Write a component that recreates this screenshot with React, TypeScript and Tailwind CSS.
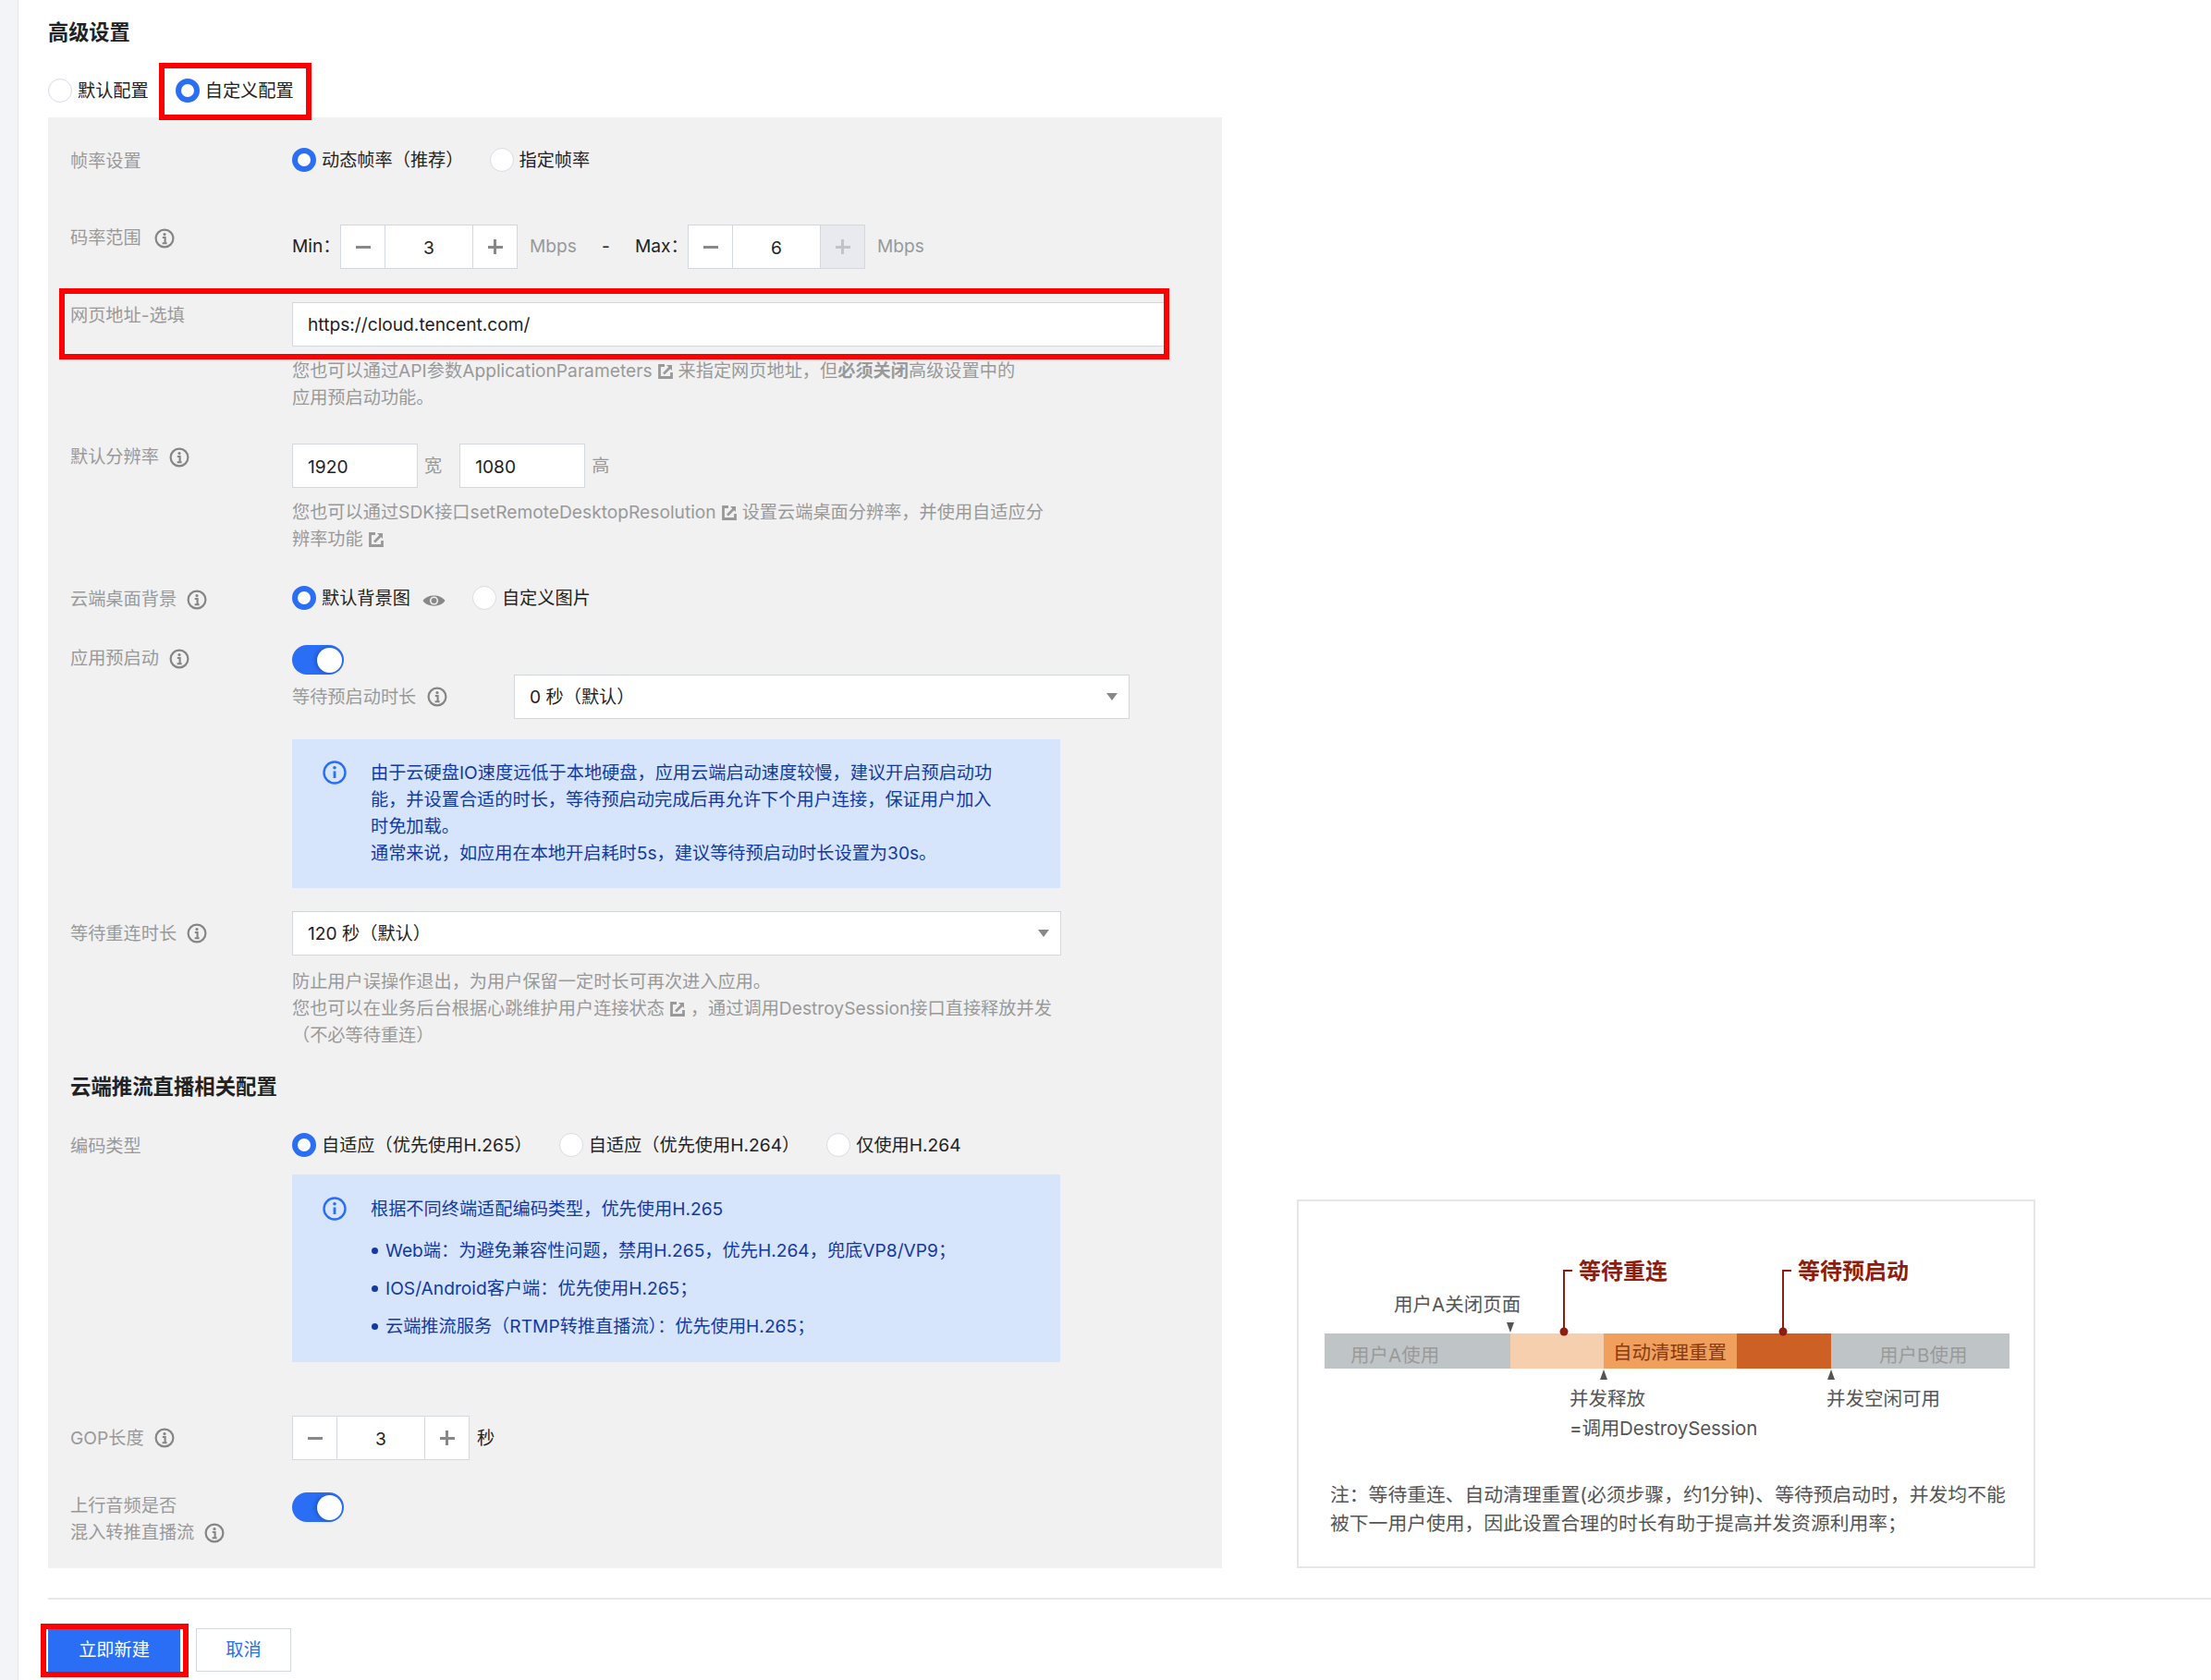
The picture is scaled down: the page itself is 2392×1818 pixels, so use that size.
import React from "react";

function Info({ className = "text-[#858585]" }: { className?: string }) {
  return (
    <svg viewBox="0 0 22 22" className={`w-[22px] h-[22px] shrink-0 ${className}`} fill="none" stroke="currentColor">
      <circle cx="11" cy="11" r="9.4" strokeWidth="2.2" />
      <circle cx="11" cy="6.6" r="1.6" fill="currentColor" stroke="none" />
      <path d="M8.8 10h2.8v6 M8.6 16.2h5" strokeWidth="2.1" />
    </svg>
  );
}

function ExtLink() {
  return (
    <svg viewBox="0 0 16 16" className="inline-block w-4 h-4 mx-[6px] align-[-2px] text-[#999999]" fill="none" stroke="currentColor">
      <path d="M7 1.5H1.5v13h13V9" strokeWidth="2.8" />
      <path d="M6 10.5L13 3.5" strokeWidth="2.6" />
      <path d="M9 1h6v6z" fill="currentColor" stroke="none" />
    </svg>
  );
}

function Eye() {
  return (
    <svg viewBox="0 0 25 16" className="w-[25px] h-4 ml-[13px] mt-2">
      <path d="M0.5 8C5 0.5 20 0.5 24.5 8C20 15.5 5 15.5 0.5 8Z" fill="#888888" />
      <circle cx="12.5" cy="8" r="4.6" fill="#f1f1f2" />
      <circle cx="12.5" cy="8" r="3" fill="#888888" />
    </svg>
  );
}

function Radio({ label, on, className = "" }: { label: React.ReactNode; on?: boolean; className?: string }) {
  return (
    <div className={`flex items-center h-[26px] text-[#222222] ${className}`}>
      <span
        className={
          on
            ? "w-[26px] h-[26px] rounded-full bg-white border-[6px] border-[#2a6ef5] mr-[6px] shrink-0"
            : "w-[26px] h-[26px] rounded-full bg-white border border-[#d8dce4] mr-[6px] shrink-0"
        }
      />
      <span className="whitespace-nowrap">{label}</span>
    </div>
  );
}

function Label({ text, info, className = "" }: { text: React.ReactNode; info?: boolean; className?: string }) {
  return (
    <div className={`w-[240px] shrink-0 flex items-center text-[#999999] whitespace-nowrap ${className}`}>
      {text}
      {info && <span className="ml-[11px]"><Info /></span>}
    </div>
  );
}

function Stepper({ value, plusDisabled }: { value: string; plusDisabled?: boolean }) {
  return (
    <div className="flex h-12 w-[192px] bg-white border-[1.5px] border-[#d3d7de] text-[#222222]">
      <div className="w-[48px] flex items-center justify-center border-r border-[#d3d7de] text-[#888888]">
        <span className="w-4 h-[3px] bg-current" />
      </div>
      <div className="flex-1 flex items-center justify-center pt-[2px]">{value}</div>
      <div
        className={`relative w-[48px] flex items-center justify-center border-l border-[#d3d7de] ${
          plusDisabled ? "bg-[#e8eaef] text-[#c0c3c9]" : "text-[#888888]"
        }`}
      >
        <span className="w-4 h-[3px] bg-current" />
        <span className="absolute w-[3px] h-4 bg-current" />
      </div>
    </div>
  );
}

function Select({ value, className = "" }: { value: string; className?: string }) {
  return (
    <div className={`flex items-center justify-between h-12 bg-white border-[1.5px] border-[#d3d7de] pl-4 pr-3 text-[#222222] ${className}`}>
      <span>{value}</span>
      <span className="w-0 h-0 border-x-[6.5px] border-x-transparent border-t-[8px] border-t-[#888888]" />
    </div>
  );
}

function Toggle() {
  return (
    <div className="flex items-center justify-end w-14 h-8 pr-[2px] rounded-full bg-[#2a6ef5]">
      <span className="w-[27px] h-[27px] rounded-full bg-white shadow-[-2px_0_4px_rgba(0,0,60,0.25)]" />
    </div>
  );
}

function Hint({ lines, className = "" }: { lines: React.ReactNode[]; className?: string }) {
  return (
    <div className={`text-[#999999] ${className}`}>
      {lines.map((l, i) => (
        <div key={i} className="whitespace-nowrap">{l}</div>
      ))}
    </div>
  );
}

function Notice({ children, className = "" }: { children: React.ReactNode; className?: string }) {
  return (
    <div className={`flex w-[831px] bg-[#d6e5fc] pl-[33px] text-[#14399f] ${className}`}>
      <svg viewBox="0 0 26 26" className="w-[26px] h-[26px] shrink-0 mt-[1px] mr-[26px] text-[#2a6ef5]" fill="none" stroke="currentColor">
        <circle cx="13" cy="13" r="11.5" strokeWidth="2.4" />
        <circle cx="13" cy="7.8" r="1.8" fill="currentColor" stroke="none" />
        <path d="M13 11.5v7.5" strokeWidth="2.8" />
      </svg>
      <div className="whitespace-nowrap">{children}</div>
    </div>
  );
}

function Bullet({ children }: { children: React.ReactNode }) {
  return (
    <div className="flex items-center mt-3">
      <span className="w-[7px] h-[7px] rounded-full bg-[#14399f] ml-[1px] mr-2" />
      {children}
    </div>
  );
}

function Diagram() {
  return (
    <div className="relative w-[799px] h-[399px] bg-white border-2 border-[#e6e6e6] text-[20.5px] leading-[30px] text-[#555555]">
      <div className="absolute left-[28px] top-[143px] flex h-[38px] w-[741px] text-[#9a9a9a]">
        <div className="w-[201px] bg-[#bfc5c7] pl-[28px] pt-[9px]">用户A使用</div>
        <div className="w-[101px] bg-[#f5cfae]" />
        <div className="w-[144px] bg-[#f0a05c] pl-[10px] pt-[6px] text-[#8a3a10]">自动清理重置</div>
        <div className="w-[102px] bg-[#cd6024]" />
        <div className="w-[193px] bg-[#bfc5c7] pl-[52px] pt-[9px]">用户B使用</div>
      </div>
      <svg className="absolute inset-0 w-full h-full" fill="none">
        <path d="M296 75H287V140 M533 75H524V140" stroke="#8c1d0f" strokeWidth="2" />
        <circle cx="287" cy="141" r="4.5" fill="#8c1d0f" />
        <circle cx="524" cy="141" r="4.5" fill="#8c1d0f" />
        <path d="M225 131h8l-4 11z M326 193h8l-4-11z M572 193h8l-4-11z" fill="#555555" />
      </svg>
      <div className="absolute left-[303px] top-[61px] text-[24px] font-semibold text-[#8c1d0f]">等待重连</div>
      <div className="absolute left-[540px] top-[61px] text-[24px] font-semibold text-[#8c1d0f]">等待预启动</div>
      <div className="absolute left-[103px] top-[97px]">用户A关闭页面</div>
      <div className="absolute left-[293px] top-[199px] whitespace-nowrap">并发释放</div>
      <div className="absolute left-[293px] top-[231px] whitespace-nowrap tracking-[-0.15px]">=调用DestroySession</div>
      <div className="absolute left-[571px] top-[199px] whitespace-nowrap">并发空闲可用</div>
      <div className="absolute left-[34px] top-[303px] whitespace-nowrap text-[20.8px]">注：等待重连、自动清理重置(必须步骤，约1分钟)、等待预启动时，并发均不能</div>
      <div className="absolute left-[34px] top-[334px] whitespace-nowrap text-[20.8px]">被下一用户使用，因此设置合理的时长有助于提高并发资源利用率；</div>
    </div>
  );
}

export default function App() {
  return (
    <div className="flex w-[2392px] h-[1818px] overflow-hidden bg-white text-[19.2px] leading-[29px] [font-family:Inter,'Noto_Sans_CJK_SC',sans-serif]">
      <div className="w-5 shrink-0 bg-[#f2f4f8] border-r border-[#e3e5ea]" />
      <div className="flex-1 pl-8 pt-5 min-w-0">
        <div className="text-[22.2px] leading-[30px] font-semibold text-[#222222]">高级设置</div>

        <div className="flex mt-[35px]">
          <Radio label="默认配置" />
          <div className="relative ml-[29px]">
            <Radio on label="自定义配置" />
            <div className="absolute left-[-18px] top-[-17px] w-[165px] h-[62px] border-[6px] border-[#fe0000] z-10" />
          </div>
        </div>

        <div className="flex items-end mt-4">
          {/* left form panel */}
          <div className="w-[1270px] bg-[#f1f1f2] pl-6 pt-[33px] pb-6">
            <div className="flex h-[26px]">
              <Label text="帧率设置" className="h-[29px]" />
              <div className="flex">
                <Radio on label="动态帧率（推荐）" />
                <Radio label="指定帧率" className="ml-[28px]" />
              </div>
            </div>

            <div className="flex mt-[57px]">
              <Label text={<span className="mr-[3px]">码率范围</span>} info className="h-[29px]" />
              <div className="flex items-center">
                <span className="w-[52px] pb-[2px] text-[#222222]">Min：</span>
                <Stepper value="3" />
                <span className="w-[52px] ml-[13px] pb-[2px] text-[#999999]">Mbps</span>
                <span className="w-[7px] ml-[26px] pb-[2px] text-[#222222]">-</span>
                <span className="ml-[29px] w-[57px] pb-[2px] text-[#222222]">Max：</span>
                <Stepper value="6" plusDisabled />
                <span className="ml-[13px] pb-[2px] text-[#999999]">Mbps</span>
              </div>
            </div>

            <div className="relative flex mt-[36px]">
              <Label text="网页地址-选填" className="h-[29px]" />
              <input
                readOnly
                value="https://cloud.tencent.com/"
                className="w-[946px] h-12 bg-white border-[1.5px] border-[#d3d7de] pl-4 text-[#222222]"
              />
              <div className="absolute left-[-12px] top-[-15px] w-[1201px] h-[77px] border-[6px] border-[#fe0000]" />
            </div>
            <Hint
              className="mt-3 ml-[240px]"
              lines={[
                <>您也可以通过API参数ApplicationParameters<ExtLink />来指定网页地址，但<b className="font-semibold">必须关闭</b>高级设置中的</>,
                "应用预启动功能。",
              ]}
            />

            <div className="flex mt-[35px]">
              <Label text="默认分辨率" info className="h-[29px]" />
              <div className="flex items-center text-[#999999]">
                <input readOnly value="1920" className="w-[136px] h-12 bg-white border-[1.5px] border-[#d3d7de] pl-4 pt-[1px] text-[#222222]" />
                <span className="ml-[7px] mr-[19px]">宽</span>
                <input readOnly value="1080" className="w-[136px] h-12 bg-white border-[1.5px] border-[#d3d7de] pl-4 pt-[1px] text-[#222222]" />
                <span className="ml-[7px]">高</span>
              </div>
            </div>
            <Hint
              className="mt-3 ml-[240px]"
              lines={[
                <>您也可以通过SDK接口setRemoteDesktopResolution<ExtLink />设置云端桌面分辨率，并使用自适应分</>,
                <>辨率功能<ExtLink /></>,
              ]}
            />

            <div className="flex h-[26px] mt-[36px]">
              <Label text="云端桌面背景" info className="h-[29px]" />
              <div className="flex">
                <Radio on label="默认背景图" />
                <Eye />
                <Radio label="自定义图片" className="ml-[29px]" />
              </div>
            </div>

            <div className="flex mt-[38px]">
              <Label text="应用预启动" info className="h-[29px]" />
              <Toggle />
            </div>
            <div className="flex items-center ml-[240px]">
              <div className="w-[240px] flex items-center text-[#999999]">
                等待预启动时长
                <span className="ml-3"><Info /></span>
              </div>
              <Select value="0 秒（默认）" className="w-[666px]" />
            </div>
            <Notice className="ml-[240px] mt-[22px] pt-[22px] pb-[23px]">
              <div>由于云硬盘IO速度远低于本地硬盘，应用云端启动速度较慢，建议开启预启动功</div>
              <div>能，并设置合适的时长，等待预启动完成后再允许下个用户连接，保证用户加入</div>
              <div>时免加载。</div>
              <div>通常来说，如应用在本地开启耗时5s，建议等待预启动时长设置为30s。</div>
            </Notice>

            <div className="flex mt-[25px]">
              <Label text="等待重连时长" info className="h-12" />
              <Select value="120 秒（默认）" className="w-[832px]" />
            </div>
            <Hint
              className="mt-[14px] ml-[240px]"
              lines={[
                "防止用户误操作退出，为用户保留一定时长可再次进入应用。",
                <>您也可以在业务后台根据心跳维护用户连接状态<ExtLink />，通过调用DestroySession接口直接释放并发</>,
                "（不必等待重连）",
              ]}
            />

            <div className="mt-[26px] text-[22.4px] leading-[30px] font-semibold text-[#222222]">云端推流直播相关配置</div>

            <div className="flex h-[26px] mt-[35px]">
              <Label text="编码类型" className="h-[29px]" />
              <div className="flex">
                <Radio on label="自适应（优先使用H.265）" />
                <Radio label="自适应（优先使用H.264）" className="ml-[29px]" />
                <Radio label="仅使用H.264" className="ml-[29px]" />
              </div>
            </div>
            <Notice className="ml-[240px] mt-[19px] pt-[23px] pb-[24px]">
              <div className="mb-4">根据不同终端适配编码类型，优先使用H.265</div>
              <Bullet>Web端：为避免兼容性问题，禁用H.265，优先H.264，兜底VP8/VP9；</Bullet>
              <Bullet>IOS/Android客户端：优先使用H.265；</Bullet>
              <Bullet>云端推流服务（RTMP转推直播流）：优先使用H.265；</Bullet>
            </Notice>

            <div className="flex mt-[58px]">
              <Label text="GOP长度" info className="h-12" />
              <div className="flex items-center text-[#222222]">
                <Stepper value="3" />
                <span className="ml-2">秒</span>
              </div>
            </div>

            <div className="flex mt-[35px]">
              <div className="w-[240px] text-[#999999]">
                <div>上行音频是否</div>
                <div className="flex items-center">
                  混入转推直播流
                  <span className="ml-[11px]"><Info /></span>
                </div>
              </div>
              <Toggle />
            </div>
          </div>

          {/* right illustration */}
          <div className="ml-[81px]">
            <Diagram />
          </div>
        </div>

        <div className="mt-8 h-[2px] bg-[#e8e8e8]" />

        <div className="flex mt-[31px]">
          <div className="relative">
            <button className="w-[143px] h-[47px] bg-[#2a6ef5] text-white">立即新建</button>
            <div className="absolute left-[-8px] top-[-5px] w-[160px] h-[58px] border-[6px] border-[#fe0000]" />
          </div>
          <button className="ml-[17px] w-[103px] h-[47px] bg-white border-[1.5px] border-[#d3d7de] text-[#2a6ef5]">取消</button>
        </div>
      </div>
    </div>
  );
}
